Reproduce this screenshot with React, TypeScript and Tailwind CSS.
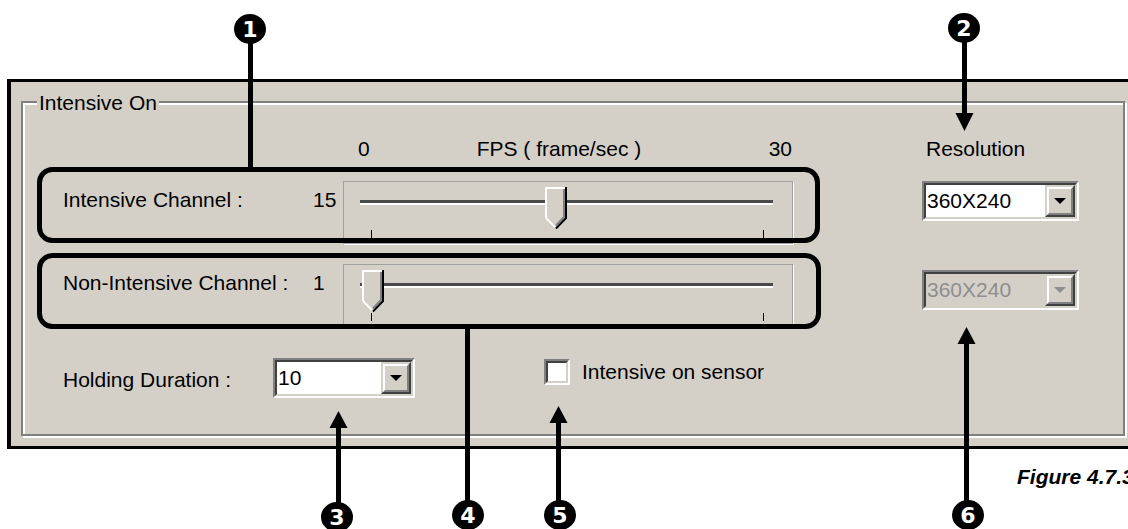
import React from 'react';

// classic win2k sunken edge (2 lines)
function Sunken({ className, inner, children }: { className: string; inner: string; children?: React.ReactNode }) {
  return (
    <div className={`border-2 border-t-[#808080] border-l-[#808080] border-b-white border-r-white ${className}`}>
      <div className={`h-full w-full border-2 border-t-[#404040] border-l-[#404040] border-b-[#d4d0c8] border-r-[#d4d0c8] ${inner}`}>
        {children}
      </div>
    </div>
  );
}

function DropButton({ disabled }: { disabled?: boolean }) {
  return (
    <div className="w-[30px] h-full border-2 border-t-[#d4d0c8] border-l-[#d4d0c8] border-b-[#404040] border-r-[#404040]">
      <div className="h-full w-full border-2 border-t-white border-l-white border-b-[#808080] border-r-[#808080] bg-[#d4d0c8] flex items-center justify-center">
        <svg width="12" height="6" viewBox="0 0 12 6">
          <polygon points="0,0 12,0 6,6" fill={disabled ? '#8e8e8e' : '#000'} />
        </svg>
      </div>
    </div>
  );
}

function Combo({ value, width, disabled }: { value: string; width: string; disabled?: boolean }) {
  return (
    <Sunken className={`${width} h-[40px]`} inner={`flex ${disabled ? 'bg-[#d4d0c8]' : 'bg-white'}`}>
      <span className={`flex-1 pl-[1px] leading-[32px] ${disabled ? 'text-[#8e8e8e]' : 'text-black'}`}>{value}</span>
      <DropButton disabled={disabled} />
    </Sunken>
  );
}

function Thumb() {
  return (
    <svg width="22" height="42" viewBox="0 0 22 42">
      <polygon points="0,0 22,0 22,31 11,42 0,31" fill="#d4d0c8" />
      <polyline points="1,31 1,1 20,1" stroke="#fff" strokeWidth="2" fill="none" />
      <line x1="1" y1="31" x2="10" y2="40" stroke="#fff" strokeWidth="2" />
      <polyline points="21,0 21,31 11,41.5" stroke="#000" strokeWidth="2" fill="none" />
      <polyline points="19,2 19,30 11,38.5" stroke="#808080" strokeWidth="2" fill="none" />
    </svg>
  );
}

function Slider({ value }: { value: number }) {
  const left = 16 + (value / 30) * 392;
  return (
    <div className="relative w-[450px] h-[63px] border border-[#a0a0a0] shadow-[1px_1px_0_#fff]">
      <div className="ml-[16px] mt-[18px] w-[413px] h-[5px] border-t-[3px] border-t-[#4a4a4a] border-b-2 border-b-white" />
      <div className="ml-[27px] mt-[25px] w-[393px] flex justify-between">
        <div className="w-[1px] h-[8px] bg-black" />
        <div className="w-[1px] h-[8px] bg-black" />
      </div>
      <div className="absolute top-[5px]" style={{ left: left - 11 }}>
        <Thumb />
      </div>
    </div>
  );
}

function Callout({ cx, cy, n }: { cx: number; cy: number; n: number }) {
  return (
    <g>
      <ellipse cx={cx} cy={cy} rx={16} ry={15} fill="#000" />
      <text x={cx} y={cy + 8} textAnchor="middle" fill="#fff" fontFamily="'DejaVu Sans', sans-serif" fontWeight="bold" fontSize="22">
        {n}
      </text>
    </g>
  );
}

function UpArrow({ x, tip, to }: { x: number; tip: number; to: number }) {
  return (
    <g>
      <line x1={x} y1={tip + 12} x2={x} y2={to} stroke="#000" strokeWidth="5" />
      <polygon points={`${x - 9},${tip + 17} ${x + 9},${tip + 17} ${x},${tip}`} fill="#000" />
    </g>
  );
}

function Annotations() {
  return (
    <svg className="absolute top-0 left-0 pointer-events-none" width="1128" height="529" viewBox="0 0 1128 529">
      <rect x="39.5" y="169.5" width="778" height="71" rx="13" fill="none" stroke="#000" strokeWidth="5" />
      <rect x="39.5" y="255.5" width="779" height="71" rx="13" fill="none" stroke="#000" strokeWidth="5" />

      <line x1="250.5" y1="35" x2="250.5" y2="168" stroke="#000" strokeWidth="5" />
      <Callout cx={250} cy={29} n={1} />

      <line x1="964.5" y1="35" x2="964.5" y2="118" stroke="#000" strokeWidth="5" />
      <polygon points="955.5,113 973.5,113 964.5,131" fill="#000" />
      <Callout cx={964} cy={28} n={2} />

      <UpArrow x={338.5} tip={411} to={508} />
      <Callout cx={337} cy={517} n={3} />

      <line x1="467.5" y1="328" x2="467.5" y2="508" stroke="#000" strokeWidth="5" />
      <Callout cx={468} cy={515} n={4} />

      <UpArrow x={558.5} tip={406} to={508} />
      <Callout cx={560} cy={515} n={5} />

      <UpArrow x={966.5} tip={327} to={508} />
      <Callout cx={968} cy={515} n={6} />
    </svg>
  );
}

export default function App() {
  return (
    <div className="relative w-[1128px] h-[529px] overflow-hidden bg-white pt-[79px] font-['Liberation_Sans',Arial,sans-serif] text-[21px] text-black">
      <div className="ml-[7px] w-[1131px] h-[370px] bg-[#d4d0c8] border-black border-t-[3px] border-b-[3px] border-l-4 border-r-[3px] pt-[19px] pl-[10px] pr-[10px] pb-[10px]">
        <div className="relative h-full border-2 border-[#808080] shadow-[inset_2px_2px_0_#fff,2px_2px_0_#fff]">
          <span className="absolute left-[14px] top-[-12px] px-[2px] bg-[#d4d0c8] leading-[24px]">Intensive On</span>

          <div className="flex flex-col pt-[34px] leading-[24px]">
            {/* scale header */}
            <div className="flex h-[24px]">
              <div className="w-[320px]" />
              <div className="w-[450px] flex">
                <span className="pl-[15px]">0</span>
                <span className="ml-[107px]">FPS ( frame/sec )</span>
                <span className="ml-auto pr-[1px]">30</span>
              </div>
              <div className="ml-[129px] pl-[4px]">Resolution</div>
            </div>

            {/* intensive */}
            <div className="flex items-start mt-[20px]">
              <div className="w-[320px] pl-[40px] pt-[7px] flex">
                <span className="w-[250px]">Intensive Channel :</span>
                <span>15</span>
              </div>
              <Slider value={15} />
              <div className="ml-[129px]">
                <Combo value="360X240" width="w-[157px]" />
              </div>
            </div>

            {/* non-intensive */}
            <div className="flex items-start mt-[20px]">
              <div className="w-[320px] pl-[40px] pt-[7px] flex">
                <span className="w-[250px]">Non-Intensive Channel :</span>
                <span>1</span>
              </div>
              <Slider value={1} />
              <div className="ml-[129px] mt-[6px]">
                <Combo value="360X240" width="w-[157px]" disabled />
              </div>
            </div>

            {/* holding + sensor */}
            <div className="flex items-start mt-[31px]">
              <div className="pl-[40px] w-[250px] pt-[10px]">Holding Duration :</div>
              <Combo value="10" width="w-[142px]" />
              <div className="ml-[129px] mt-[1px] flex items-center gap-[12px]">
                <Sunken className="w-[26px] h-[26px]" inner="bg-white" />
                <span>Intensive on sensor</span>
              </div>
            </div>
          </div>
        </div>
      </div>

      <div className="mt-[16px] pl-[1017px] whitespace-nowrap leading-[24px] font-bold italic">Figure 4.7.3</div>

      <Annotations />
    </div>
  );
}
